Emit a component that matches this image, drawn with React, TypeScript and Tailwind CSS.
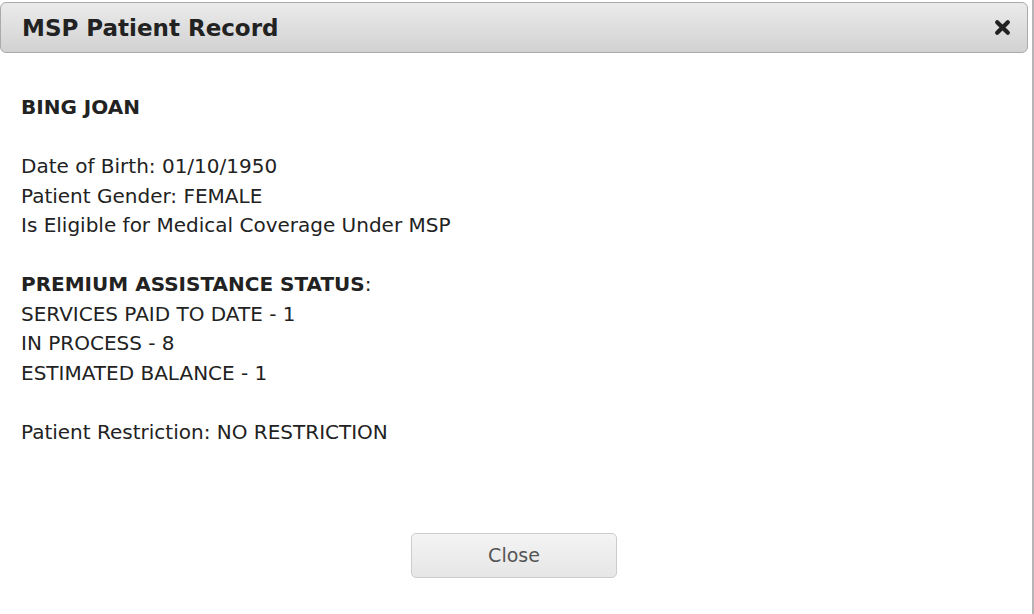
import React from 'react';

const FONT = "font-['DejaVu_Sans',sans-serif]";

export default function App() {
  return (
    <div className={`h-[614px] w-[1034px] bg-white ${FONT} text-[#222]`}>
      <div className="flex h-full w-[1034px] flex-col border-r-2 border-[#b5b5b5]">
        {/* Title bar */}
        <div className="mr-[4px] mt-[2px] flex h-[51px] items-center justify-between rounded-[6px] border border-[#aaa] bg-gradient-to-b from-[#ebebeb] to-[#d2d2d2] pl-[21px] pr-[16px]">
          <h1 className="pt-[1px] text-[23px] font-bold text-[#222]">MSP Patient Record</h1>
          <svg width="17" height="17" viewBox="0 0 16 16" aria-label="close">
            <path d="M3 3 L13 13 M13 3 L3 13" stroke="#222" strokeWidth="4" strokeLinecap="round" />
          </svg>
        </div>

        {/* Body */}
        <div className="flex flex-1 flex-col px-[21px] pt-[40px] text-[20px] leading-[29.5px]">
          <p className="font-bold">BING JOAN</p>
          <p className="mt-[29.5px]">Date of Birth: 01/10/1950</p>
          <p>Patient Gender: FEMALE</p>
          <p>Is Eligible for Medical Coverage Under MSP</p>
          <p className="mt-[29.5px]">
            <span className="font-bold">PREMIUM ASSISTANCE STATUS</span>:
          </p>
          <p>SERVICES PAID TO DATE - 1</p>
          <p>IN PROCESS - 8</p>
          <p>ESTIMATED BALANCE - 1</p>
          <p className="mt-[29.5px]">Patient Restriction: NO RESTRICTION</p>
        </div>

        {/* Footer */}
        <div className="flex justify-center pb-[36px] pr-[4px]">
          <button className="h-[45px] w-[206px] rounded-[5px] border border-[#ccc] bg-gradient-to-b from-[#f4f4f4] to-[#e6e6e6] text-[19px] text-[#555]">
            Close
          </button>
        </div>
      </div>
    </div>
  );
}
